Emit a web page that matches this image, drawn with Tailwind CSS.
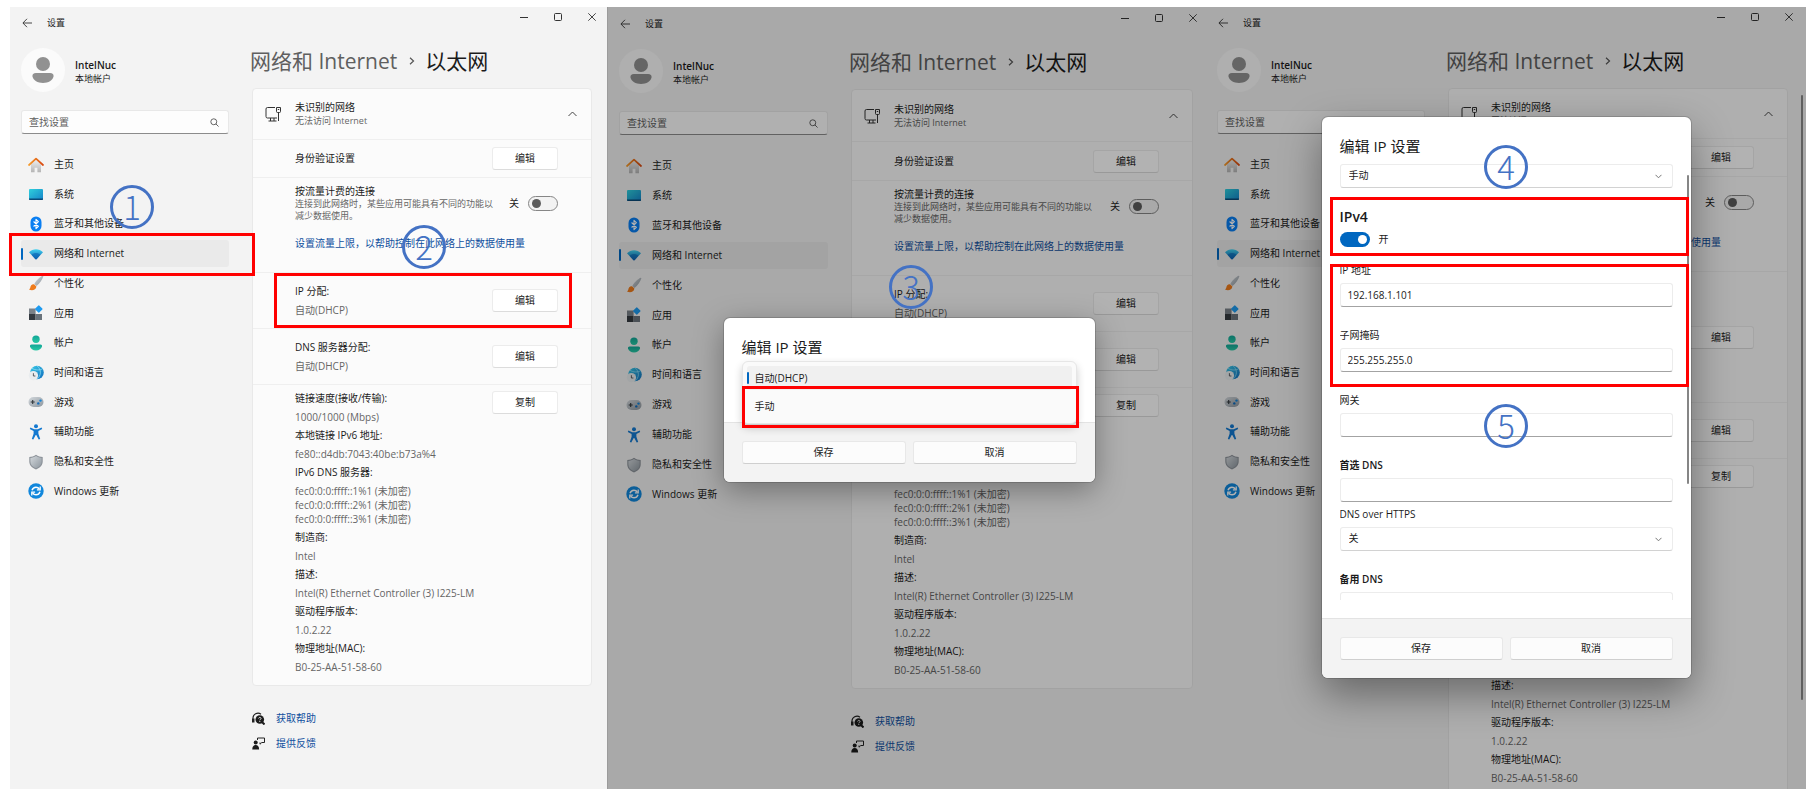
<!DOCTYPE html>
<html lang="zh-CN">
<head>
  <meta charset="UTF-8">
  <meta name="viewport" content="width=device-width, initial-scale=1.0">
  <title>设置 - 编辑 IP 设置</title>
  <script src="https://cdn.jsdelivr.net/npm/@tailwindcss/browser@4"></script>
</head>
<body class="bg-white font-['Open_Sans','Noto_Sans_CJK_SC',sans-serif] text-[10px] text-[#1b1b1b]">
  <!-- Shared gradients -->
  <svg class="absolute w-0 h-0" aria-hidden="true">
    <defs>
      <linearGradient id="gRoof" x1="0" x2="1"><stop offset="0" stop-color="#f59b2b"/><stop offset="1" stop-color="#d9480f"/></linearGradient>
      <linearGradient id="gWall" x1="0" x2="0" y1="0" y2="1"><stop offset="0" stop-color="#f0f0f0"/><stop offset="1" stop-color="#b4b4b4"/></linearGradient>
      <linearGradient id="gScreen" x1="0" x2="1" y1="0" y2="1"><stop offset="0" stop-color="#2fd0dc"/><stop offset="1" stop-color="#1583c9"/></linearGradient>
      <linearGradient id="gWifi" x1="0" x2="0" y1="0" y2="1"><stop offset="0" stop-color="#43d3f2"/><stop offset="1" stop-color="#0a5fae"/></linearGradient>
      <linearGradient id="gUser" x1="0" x2="0" y1="0" y2="1"><stop offset="0" stop-color="#12a596"/><stop offset="1" stop-color="#27c9a5"/></linearGradient>
      <linearGradient id="gGlobe" x1="0" x2="1" y1="0" y2="1"><stop offset="0" stop-color="#3ccbe8"/><stop offset="1" stop-color="#0f6cbd"/></linearGradient>
      <linearGradient id="gMetal" x1="0" x2="1" y1="0" y2="1"><stop offset="0" stop-color="#d3d8dc"/><stop offset="1" stop-color="#8d969e"/></linearGradient>
    </defs>
  </svg>

  <main class="h-screen pt-[7px] pb-2 pl-[10px] pr-[5px] grid grid-cols-[598fr_600fr_598fr]">
    <section id="step1" class="relative bg-[#f3f3f3] border-r border-[#9b9b9b]"></section>
    <section id="step2" class="relative overflow-hidden bg-[#f3f3f3]"></section>
    <section id="step3" class="relative overflow-hidden bg-[#f3f3f3]"></section>
  </main>

  <script>
    const icons = {
      home: '<path d="M3 7v8.3h3.6v-4.6h2.8v4.6H13V7L8 2.6z" fill="url(#gWall)"/><path d="M1 8 8 1.6 15 8" fill="none" stroke="url(#gRoof)" stroke-width="1.7" stroke-linecap="round" stroke-linejoin="round"/>',
      system: '<rect x="1" y="3" width="14" height="11" rx="1" fill="url(#gScreen)"/><path d="M1 12.4h14v.6a1 1 0 0 1-1 1H2a1 1 0 0 1-1-1z" fill="#0b4a78"/>',
      bluetooth: '<rect x="2.5" y=".5" width="11" height="15" rx="5.5" fill="#0a7ff2"/><path d="m5.6 5.5 4.8 4.8L8 12.6V3.4l2.4 2.3-4.8 4.8" fill="none" stroke="#fff" stroke-width="1.1" stroke-linejoin="round"/>',
      network: '<path d="M1 6.2C4.8 2.2 11.2 2.2 15 6.2L8.8 13a1.1 1.1 0 0 1-1.6 0z" fill="url(#gWifi)"/><path d="M3.6 8.7C6 6.4 10 6.4 12.4 8.7L8.8 13a1.1 1.1 0 0 1-1.6 0z" fill="#0a62b4" fill-opacity=".6"/>',
      brush: '<path d="M14.6.8c-3 1.3-6.6 5-8.3 8.2l2.2 2c3-2.3 6-6.4 6.9-9.7.1-.4-.4-.7-.8-.5z" fill="url(#gMetal)"/><path d="M6 9.2c-2.4-.2-3.4 1.6-3.6 3-.1 1-.6 1.8-1.4 2.3 2.8 1.4 7 .8 7.4-3z" fill="#ee7b1c"/>',
      apps: '<path d="M1 3.5h6.6V9H1z" fill="#7a8188"/><path d="M1 9h6.6v6H1z" fill="#343a40"/><path d="M7.6 9H14v6H7.6z" fill="#6a737b"/><rect x="8" y="1.2" width="5.6" height="5.6" rx=".6" transform="rotate(45 10.8 4)" fill="#1e9bf0"/>',
      user: '<circle cx="8" cy="4.2" r="3.7" fill="url(#gUser)"/><path d="M3.6 9.4h8.8c1.2 0 1.8.8 1.6 1.9-.5 2.6-2.9 4.2-6 4.2s-5.500-1.600-6-4.200c-.2-1.100.4-1.900 1.600-1.900z" fill="url(#gUser)"/>',
      time: '<circle cx="9" cy="7.5" r="6.8" fill="url(#gGlobe)"/><path d="M4 3.2c3 2.300 8.500 2.300 10.600.4M9 .8c4.500 3.700 4.500 9.500 0 13.400" fill="none" stroke="#9be4f7" stroke-width=".7"/><circle cx="5.4" cy="10.6" r="4.7" fill="#e9ecee"/><path d="M5.4 8.2v2.8h2" fill="none" stroke="#4a4f54" stroke-width=".9"/>',
      game: '<rect x=".5" y="3" width="15" height="10" rx="5" fill="url(#gMetal)"/><path d="M4.7 6v4M2.7 8h4" stroke="#30363b" stroke-width="1.1"/><circle cx="10.3" cy="9.4" r="1.2" fill="#0f6cbd"/><circle cx="12.5" cy="6.6" r="1.2" fill="#1685d8"/>',
      access: '<circle cx="8" cy="2.2" r="2" fill="#1479d0"/><path d="M2.4 3.6 6.3 5.2h3.4l3.9-1.6.6 1.3-3.8 2v2.8l1.8 5.2-1.5.6L8.3 11h-.6l-2.4 4.5-1.5-.6 1.8-5.2V6.9l-3.8-2z" fill="#1479d0"/>',
      shield: '<path d="M8 .8c2 1.5 4.3 2.1 6.7 2.2v4.6c0 3.8-2.6 6.3-6.7 7.9C3.9 13.9 1.3 11.4 1.3 7.6V3C3.7 2.9 6 2.3 8 .8z" fill="#8c9299"/><path d="M8 2c1.700 1.200 3.600 1.700 5.600 1.900v3.700c0 3.200-2.100 5.300-5.600 6.700C4.500 12.900 2.400 10.800 2.400 7.600V3.900C4.400 3.700 6.300 3.200 8 2z" fill="url(#gMetal)"/>',
      update: '<circle cx="8" cy="8" r="7.7" fill="#1187dc"/><path d="M4 7.3C4.6 5.4 6.2 4.2 8 4.2c1.4 0 2.6.7 3.4 1.8M12 8.7c-.6 1.9-2.2 3.1-4 3.1-1.4 0-2.6-.7-3.4-1.8" fill="none" stroke="#fff" stroke-width="1.4"/><path d="M12.2 3.6v3.3H8.9M3.8 12.4V9.1h3.3" fill="none" stroke="#fff" stroke-width="1.3"/>'
    };

    const navItems = [
      ['home', '主页'], ['system', '系统'], ['bluetooth', '蓝牙和其他设备'], ['network', '网络和 Internet'],
      ['brush', '个性化'], ['apps', '应用'], ['user', '帐户'], ['time', '时间和语言'],
      ['game', '游戏'], ['access', '辅助功能'], ['shield', '隐私和安全性'], ['update', 'Windows 更新']
    ];

    const details = [
      ['链接速度(接收/传输):', '1000/1000 (Mbps)'],
      ['本地链接 IPv6 地址:', 'fe80::d4db:7043:40be:b73a%4'],
      ['IPv6 DNS 服务器:', 'fec0:0:0:ffff::1%1 (未加密)', 'fec0:0:0:ffff::2%1 (未加密)', 'fec0:0:0:ffff::3%1 (未加密)'],
      ['制造商:', 'Intel'],
      ['描述:', 'Intel(R) Ethernet Controller (3) I225-LM'],
      ['驱动程序版本:', '1.0.2.22'],
      ['物理地址(MAC):', 'B0-25-AA-51-58-60']
    ];

    const cardButton = label => `<button class="w-[66px] h-[23px] shrink-0 rounded-[3px] bg-white border border-[#ececec] border-b-[#dcdcdc]">${label}</button>`;

    function sidebar(o) {
      return `
        <aside class="${o.side} shrink-0 pt-[9px]">
          <div class="flex items-center gap-[10px] h-11">
            <svg class="w-11 h-11" viewBox="0 0 44 44" aria-hidden="true">
              <circle cx="22" cy="22" r="22" fill="#fbfbfb"/>
              <circle cx="22" cy="16" r="7" fill="#919191"/>
              <path d="M15 25h14c2.500 0 4 1.400 3.500 3.600C31.500 32.800 27.500 35 22 35s-9.500-2.200-10.500-6.400C11 26.400 12.500 25 15 25z" fill="#919191"/>
            </svg>
            <div class="pt-[3px] leading-[13px]">
              <p class="font-semibold">IntelNuc</p>
              <p class="text-[9px]">本地帐户</p>
            </div>
          </div>
          <label class="mt-[18px] h-6 flex items-center pl-[7px] pr-[9px] bg-[#fdfdfd] border border-[#e8e8e8] border-b-[#8b8b8b] rounded-[3px]">
            <input type="text" placeholder="查找设置" aria-label="查找设置" class="flex-1 min-w-0 bg-transparent outline-none placeholder:text-[#606060]">
            <svg class="w-[9px] h-[9px]" viewBox="0 0 10 10" fill="none" stroke="#555"><circle cx="4.2" cy="4.2" r="3.3"/><path d="m6.6 6.6 2.9 2.9"/></svg>
          </label>
          <nav class="mt-[17px] ${o.nav} flex flex-col justify-between">
            ${navItems.map(([icon, text]) => `
              <a href="#" class="relative h-[27px] flex items-center gap-[10px] pl-[7px] rounded-[3px] ${icon === 'network' ? 'bg-[#eaeaea]' : ''}">
                ${icon === 'network' ? '<span class="absolute left-0 w-[2px] h-3 rounded bg-[#0067c0]"></span>' : ''}
                <svg class="w-4 h-4" viewBox="0 0 16 16" aria-hidden="true">${icons[icon]}</svg>${text}
              </a>`).join('')}
          </nav>
        </aside>`;
    }

    function settingsPage(o) {
      const info = o.extra ? [o.extra, ...details] : details;
      return `
        <div class="${o.top}">
          <header class="h-8 flex items-center ${o.title}">
            <button aria-label="返回"><svg class="w-[10px] h-[10px]" viewBox="0 0 10 10" fill="none" stroke="#333" stroke-width=".9"><path d="M5 .8.9 5 5 9.2M1 5h9"/></svg></button>
            <h1 class="ml-[15px] text-[9px]">设置</h1>
            <div class="ml-auto self-start flex gap-1 h-5">
              <button class="w-[30px] grid place-items-center" aria-label="最小化"><svg class="w-2 h-2" viewBox="0 0 8 8"><path d="M0 4.5h8" stroke="#333"/></svg></button>
              <button class="w-[30px] grid place-items-center" aria-label="最大化"><svg class="w-2 h-2" viewBox="0 0 8 8"><rect x=".5" y=".5" width="7" height="7" rx="1" fill="none" stroke="#333"/></svg></button>
              <button class="w-[30px] grid place-items-center" aria-label="关闭"><svg class="w-2 h-2" viewBox="0 0 8 8"><path d="m.3.3 7.400 7.400M7.700.3.3 7.700" stroke="#333" stroke-width=".9"/></svg></button>
            </div>
          </header>
          <div class="flex gap-[21px]">
            ${sidebar(o)}
            <div class="flex-1 min-w-0 pt-2 ${o.right}">
              <h2 class="h-7 flex items-center text-[21px] leading-7 text-[#5f5f5f]">
                <span>网络和 Internet</span>
                <svg class="w-[6px] h-2 ml-3 mr-[10px]" viewBox="0 0 6 8" fill="none" stroke="#555" stroke-width="1.2"><path d="m1 .8 3.500 3.200L1 7.200"/></svg>
                <span class="text-[#1b1b1b]">以太网</span>
              </h2>
              <div class="mt-[13px] ml-[2px] bg-[#fbfbfb] border border-[#e9e9e9] rounded divide-y divide-[#efefef]">
                <div class="${o.head} flex items-center pl-[12px] pr-[14px]">
                  <svg class="w-4 h-4" viewBox="0 0 16 16" fill="none" stroke="#333"><path d="M10 1.5H2.500a1.500 1.500 0 0 0-1.500 1.500v7.500A1.500 1.500 0 0 0 2.500 12H12M5.500 12v3M9 12v3M3.500 15h8M13.500 7v8"/><path d="M11.500 1.500h4v4a1 1 0 0 1-1 1h-2a1 1 0 0 1-1-1z"/><path d="M12.800 3.500h1.400"/></svg>
                  <div class="ml-[14px] flex-1">
                    <p class="leading-[13px]">未识别的网络</p>
                    <p class="text-[9px] leading-[13px] text-[#666]">无法访问 Internet</p>
                  </div>
                  <svg class="w-[9px] h-[6px]" viewBox="0 0 9 6" fill="none" stroke="#444"><path d="m.5 5 4-4 4 4"/></svg>
                </div>
                <div class="${o.auth} flex items-center justify-between pl-[42px] pr-[33px]">
                  <p>身份验证设置</p>${cardButton('编辑')}
                </div>
                <div class="h-[95px] pl-[42px] pr-[33px] pt-[6px]">
                  <div class="flex gap-[9px] items-center">
                    <div class="flex-1 pr-[6px]">
                      <p class="leading-[14px]">按流量计费的连接</p>
                      <p class="text-[9px] leading-3 text-[#666]">连接到此网络时，某些应用可能具有不同的功能以减少数据使用。</p>
                    </div>
                    <label for="${o.id}-metered">关</label>
                    <input id="${o.id}-metered" type="checkbox" role="switch" class="appearance-none relative w-[30px] h-[15px] rounded-full bg-[#f3f3f3] border border-[#868686] before:absolute before:left-[3px] before:top-[2px] before:w-[9px] before:h-[9px] before:rounded-full before:bg-[#5c5c5c]">
                  </div>
                  <a href="#" class="block mt-[14px] leading-[14px] text-[#0f4f9e] whitespace-nowrap">设置流量上限，以帮助控制在此网络上的数据使用量</a>
                </div>
                <div class="${o.ip} flex items-center justify-between pl-[42px] pr-[33px]">
                  <div class="leading-[19px]"><p>IP 分配:</p><p class="text-[#666]">自动(DHCP)</p></div>${cardButton('编辑')}
                </div>
                <div class="h-14 flex items-center justify-between pl-[42px] pr-[33px]">
                  <div class="leading-[19px]"><p>DNS 服务器分配:</p><p class="text-[#666]">自动(DHCP)</p></div>${cardButton('编辑')}
                </div>
                <div class="flex justify-between pl-[42px] pr-[33px] pt-1 pb-[9px]">
                  <dl>
                    ${info.map(([label, ...values]) => `
                      <dt class="leading-[19px]">${label}</dt>
                      <dd class="py-[2px] text-[#666] leading-[14px]">${values.map(v => `<p>${v}</p>`).join('')}</dd>`).join('')}
                  </dl>
                  <div class="pt-[2px]">${cardButton('复制')}</div>
                </div>
              </div>
              <div class="mt-5 ml-[2px] text-[#0f4f9e]">
                <a href="#" class="h-[25px] flex items-center gap-[11px]">
                  <svg class="w-[13px] h-[13px]" viewBox="0 0 13 13"><path d="M1 10V6.500A5 5 0 0 1 9 2.200" fill="none" stroke="#222" stroke-width="1.1"/><path d="M0 6.500h2.500v4H0z" fill="#222"/><circle cx="7.8" cy="7.5" r="4.3" fill="#1b1b1b"/><path d="m10 10 2.500 2.500" stroke="#1b1b1b" stroke-width="2"/><path d="M6.600 6.500c.1-1.500 2.500-1.400 2.400 0 0 .8-1.200.9-1.200 1.800M7.800 9v1" fill="none" stroke="#f3f3f3" stroke-width=".9"/></svg>获取帮助
                </a>
                <a href="#" class="h-[25px] flex items-center gap-[11px]">
                  <svg class="w-[13px] h-[13px]" viewBox="0 0 13 13"><circle cx="3.7" cy="5.4" r="2" fill="#1b1b1b"/><path d="M.3 12.500c0-3 1.200-4.500 3.400-4.500s3.400 1.500 3.400 4.500z" fill="#1b1b1b"/><path d="M5.500 3V1h7v4.500H9.800L8 7.200V5.500" fill="none" stroke="#222"/></svg>提供反馈
                </a>
              </div>
            </div>
          </div>
        </div>`;
    }

    const dialogFooter = `
      <div class="flex gap-[7px] px-[18px] pt-[18px] pb-[18px] bg-[#f3f3f3] border-t border-[#e3e3e3]">
        <button class="flex-1 h-[23px] rounded-[3px] bg-[#fcfcfc] border border-[#e8e8e8] border-b-[#cfcfcf]">保存</button>
        <button class="flex-1 h-[23px] rounded-[3px] bg-[#fcfcfc] border border-[#e8e8e8] border-b-[#cfcfcf]">取消</button>
      </div>`;

    const selectBox = (id, label, value) => `
      <div class="relative">
        <select id="${id}" aria-label="${label}" class="appearance-none w-full h-6 pl-2 rounded-[3px] bg-white border border-[#ececec] border-b-[#d2d2d2]"><option>${value}</option></select>
        <svg class="absolute right-[11px] top-[10px] w-[7px] h-[5px]" viewBox="0 0 7 5" fill="none" stroke="#777"><path d="m.5.8 3 3 3-3"/></svg>
      </div>`;

    const textField = (id, label, value, weight = '') => `
      <label for="${id}" class="block mt-5 mb-[5px] leading-4 ${weight}">${label}</label>
      <input id="${id}" type="text" value="${value}" class="block w-full h-6 pl-[7px] rounded-[3px] bg-white border border-[#ececec] border-b-[#a3a3a3] outline-none">`;

    const dhcpDialog = `
      <div class="absolute inset-0 pt-1 pl-[2px] bg-black/30 grid place-items-center">
        <div role="dialog" aria-label="编辑 IP 设置" class="w-[371px] rounded-md bg-white shadow-[0_8px_30px_rgba(0,0,0,0.35)] ring-1 ring-black/15">
          <div class="px-[18px] pt-[19px] h-[104px]">
            <h3 class="text-[15px] leading-5">编辑 IP 设置</h3>
            <div class="relative mt-1">
              <div role="listbox" class="absolute inset-x-0 top-0 p-1 rounded-md bg-[#fafafa] border border-[#e6e6e6] shadow-[0_4px_8px_rgba(0,0,0,0.2)]">
                <button role="option" aria-selected="true" class="relative w-full h-6 pl-2 flex items-center rounded-[3px] bg-[#f0f0f0]"><span class="absolute left-0 w-[2px] h-3 rounded bg-[#0067c0]"></span>自动(DHCP)</button>
                <button role="option" aria-selected="false" class="w-full h-[26px] mt-[3px] pl-2 flex items-center rounded-[3px]">手动</button>
              </div>
            </div>
          </div>
          <div class="rounded-b-md overflow-hidden">${dialogFooter}</div>
        </div>
      </div>`;

    const manualDialog = `
      <div class="absolute inset-0 pr-[2px] pb-[2px] bg-black/30 grid place-items-center">
        <div role="dialog" aria-label="编辑 IP 设置" class="relative w-[369px] rounded-md overflow-hidden bg-white shadow-[0_16px_40px_rgba(0,0,0,0.4)] ring-1 ring-black/15">
          <div class="px-[18px] pt-[19px] pb-[18px]">
            <h3 class="text-[15px] leading-5 mb-2">编辑 IP 设置</h3>
            <div class="h-[436px] overflow-hidden">
              ${selectBox('ip-mode', 'IP 设置', '手动')}
              <h4 class="mt-[19px] text-[14px] leading-5 font-semibold">IPv4</h4>
              <div class="mt-[5px] mb-[-6px] h-4 flex items-center gap-[9px]">
                <input id="ipv4" type="checkbox" role="switch" checked class="appearance-none relative w-[30px] h-[15px] rounded-full bg-[#0067c0] before:absolute before:right-[3px] before:top-[3px] before:w-[9px] before:h-[9px] before:rounded-full before:bg-white">
                <label for="ipv4">开</label>
              </div>
              ${textField('ip-address', 'IP 地址', '192.168.1.101')}
              ${textField('subnet', '子网掩码', '255.255.255.0')}
              ${textField('gateway', '网关', '')}
              ${textField('dns1', '首选 DNS', '', 'font-semibold')}
              <label for="doh" class="block mt-1 mb-[5px] leading-4">DNS over HTTPS</label>
              ${selectBox('doh', 'DNS over HTTPS', '关')}
              ${textField('dns2', '备用 DNS', '', 'font-semibold')}
            </div>
          </div>
          ${dialogFooter}
          <span class="absolute right-[2px] top-[58px] w-[2px] h-[309px] rounded bg-[#868686]"></span>
        </div>
      </div>
      <span class="absolute right-[3px] top-[88px] w-[2px] h-[605px] rounded bg-[#5f5f5f]"></span>`;

    // Step markers drawn over the windows
    const badge = (n, place) => `<span class="absolute ${place} w-11 h-11 rounded-full border-3 border-[#4472c4] text-[#4472c4] flex items-center justify-center pb-[2px] font-['Noto_Sans_CJK_SC',sans-serif] font-light text-[33px] leading-none">${n}</span>`;
    const frame = place => `<span class="absolute ${place} border-3 border-[#ff0000] pointer-events-none"></span>`;

    document.getElementById('step1').innerHTML = settingsPage({
      id: 's1', top: 'pt-0', title: 'pl-3', side: 'w-[219px] pl-[11px]', nav: 'h-[354px]', right: 'pr-[15px]',
      head: 'h-[51px]', auth: 'h-[38px]', ip: 'h-14'
    }) + frame('left-[-1px] top-[226px] w-[246px] h-[43px]') + frame('left-[264px] top-[266px] w-[298px] h-[55px]')
      + badge(1, 'left-[100px] top-[178px]') + badge(2, 'left-[392px] top-[218px]');

    document.getElementById('step2').innerHTML = settingsPage({
      id: 's2', top: 'pt-[1px]', title: 'pl-3', side: 'w-[220px] pl-[11px]', nav: 'h-[356px]', right: 'pr-[15px]',
      head: 'h-[52px]', auth: 'h-[39px]', ip: 'h-14'
    }) + dhcpDialog + frame('left-[134px] top-[379px] w-[337px] h-[42px]') + badge(3, 'left-[281px] top-[258px]');

    document.getElementById('step3').innerHTML = settingsPage({
      id: 's3', top: 'pt-0', title: 'pl-[10px] pr-[2px]', side: 'w-[217px] pl-[9px]', nav: 'h-[354px]', right: 'pr-[18px]',
      head: 'h-[50px]', auth: 'h-[38px]', ip: 'h-[131px]', extra: ['IPv4 地址:', '192.168.1.101']
    }) + manualDialog + frame('left-[122px] top-[190px] w-[359px] h-[59px]') + frame('left-[122px] top-[257px] w-[359px] h-[123px]')
      + badge(4, 'left-[276px] top-[138px]') + badge(5, 'left-[276px] top-[397px]');
  </script>
</body>
</html>
